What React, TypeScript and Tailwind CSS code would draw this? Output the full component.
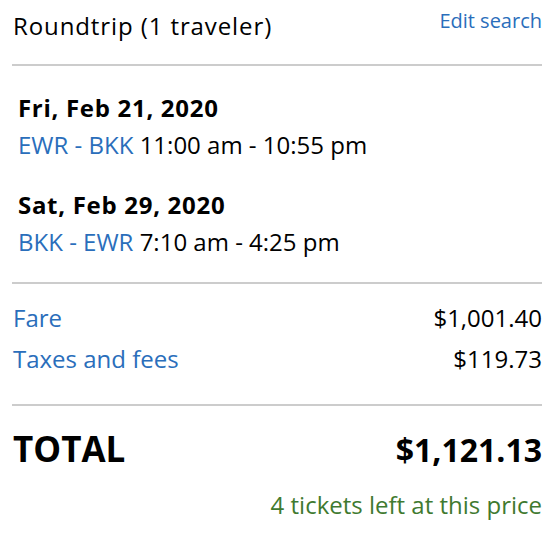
import React from 'react'

const font = { fontFamily: '"Open Sans", "Liberation Sans", sans-serif' }

function Leg({ date, route, times }: { date: string; route: string; times: string }) {
  return (
    <div className="px-[6px]">
      <div className="text-[24px] font-bold leading-[32px] tracking-[0.7px] text-black">{date}</div>
      <div className="mt-[5px] text-[24px] leading-[32px] text-black">
        <span className="text-[#2a6ebb]">{route}</span> {times}
      </div>
    </div>
  )
}

export default function App() {
  return (
    <div style={font} className="h-[534px] w-[560px] bg-white pl-[12px] pr-[18px] text-[#111]">
      <div className="flex items-start justify-between pt-[7px]">
        <div className="mt-[3px] pl-[1px] text-[24px] leading-[32px] tracking-[0.9px] text-black">
          Roundtrip (1 traveler)
        </div>
        <a className="text-[20px] leading-[28px] text-[#2a6ebb]">Edit search</a>
      </div>
      <div className="mt-[22px] h-[2px] bg-[#cccccc]" />

      <div className="flex flex-col gap-[28px] pt-[26px] pb-[24px]">
        <Leg date="Fri, Feb 21, 2020" route="EWR - BKK" times="11:00 am - 10:55 pm" />
        <Leg date="Sat, Feb 29, 2020" route="BKK - EWR" times="7:10 am - 4:25 pm" />
      </div>
      <div className="h-[2px] bg-[#cccccc]" />

      <div className="flex flex-col gap-[9px] pt-[18px] pb-[29px] text-[24px] leading-[32px]">
        <div className="flex justify-between">
          <span className="pl-[1px] text-[#2a6ebb]">Fare</span>
          <span className="text-black">$1,001.40</span>
        </div>
        <div className="flex justify-between">
          <span className="pl-[1px] text-[#2a6ebb]">Taxes and fees</span>
          <span className="text-black">$119.73</span>
        </div>
      </div>
      <div className="h-[2px] bg-[#cccccc]" />

      <div className="flex items-baseline justify-between pt-[21px]">
        <span className="pl-[1px] text-[35px] font-bold leading-[44px] text-black">TOTAL</span>
        <span className="text-[32px] font-bold leading-[40px] text-black">$1,121.13</span>
      </div>
      <div className="mt-[18px] text-right text-[24px] leading-[32px] text-[#3f7a30]">
        4 tickets left at this price
      </div>
    </div>
  )
}
